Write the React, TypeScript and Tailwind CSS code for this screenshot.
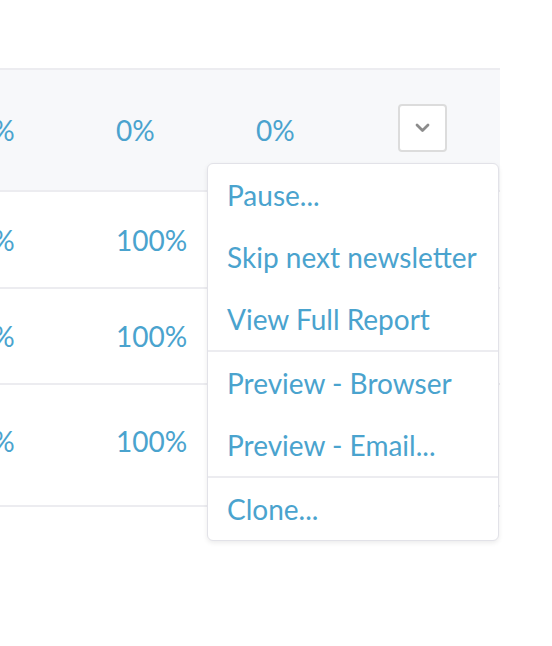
import React from 'react';

const rows = [
  { h: 'h-[122px]', bg: 'bg-[#f7f8fa]', cells: ['0%', '0%', '0%'], menu: true },
  { h: 'h-[97px]', bg: 'bg-white', cells: ['0%', '100%', ''], menu: false },
  { h: 'h-[96px]', bg: 'bg-white', cells: ['0%', '100%', ''], menu: false },
  { h: 'h-[122px] pb-[8px]', bg: 'bg-white', cells: ['0%', '100%', ''], menu: false },
];

const menuGroups = [
  ['Pause...', 'Skip next newsletter', 'View Full Report'],
  ['Preview - Browser', 'Preview - Email...'],
  ['Clone...'],
];

const ActionMenu: React.FC = () => (
  <div className="absolute right-[-52px] top-[59px] z-10 w-[292px] rounded-[6px] border border-[#e2e2e8] bg-white shadow-[0_2px_5px_rgba(0,0,0,0.08)]">
    {menuGroups.map((group, gi) => (
      <div key={gi} className={gi > 0 ? 'border-t-2 border-[#ececf0]' : ''}>
        {group.map((item) => (
          <div key={item} className="flex h-[62px] items-center pl-[19px] text-[28px] text-[#4aa3ce]">
            {item}
          </div>
        ))}
      </div>
    ))}
  </div>
);

const App: React.FC = () => {
  return (
    <div className="min-h-[646px] w-[552px] bg-white pt-[68px] font-['Lato',sans-serif]">
      <div className="w-[500px] border-t-2 border-[#ececf0]">
        {rows.map((row, i) => (
          <div key={i} className={`${row.h} ${row.bg} flex items-center border-b-2 border-[#ececf0]`}>
            <div className="ml-[-24px] flex items-center">
              {row.cells.map((c, ci) => (
                <div key={ci} className="w-[140px] shrink-0 text-[28px] text-[#4aa3ce]">
                  {c}
                </div>
              ))}
              {row.menu && (
                <div className="relative ml-[2px] mt-[-4px] shrink-0">
                  <button className="flex h-[48px] w-[49px] items-center justify-center rounded-[4px] border-2 border-[#dcdcdc] bg-white">
                    <svg width="15" height="10" viewBox="0 0 15 10" fill="none">
                      <polyline points="2,2 7.5,7.5 13,2" stroke="#8c8c8c" strokeWidth="2.8" strokeLinecap="round" strokeLinejoin="round" />
                    </svg>
                  </button>
                  <ActionMenu />
                </div>
              )}
            </div>
          </div>
        ))}
      </div>
    </div>
  );
};

export default App;
